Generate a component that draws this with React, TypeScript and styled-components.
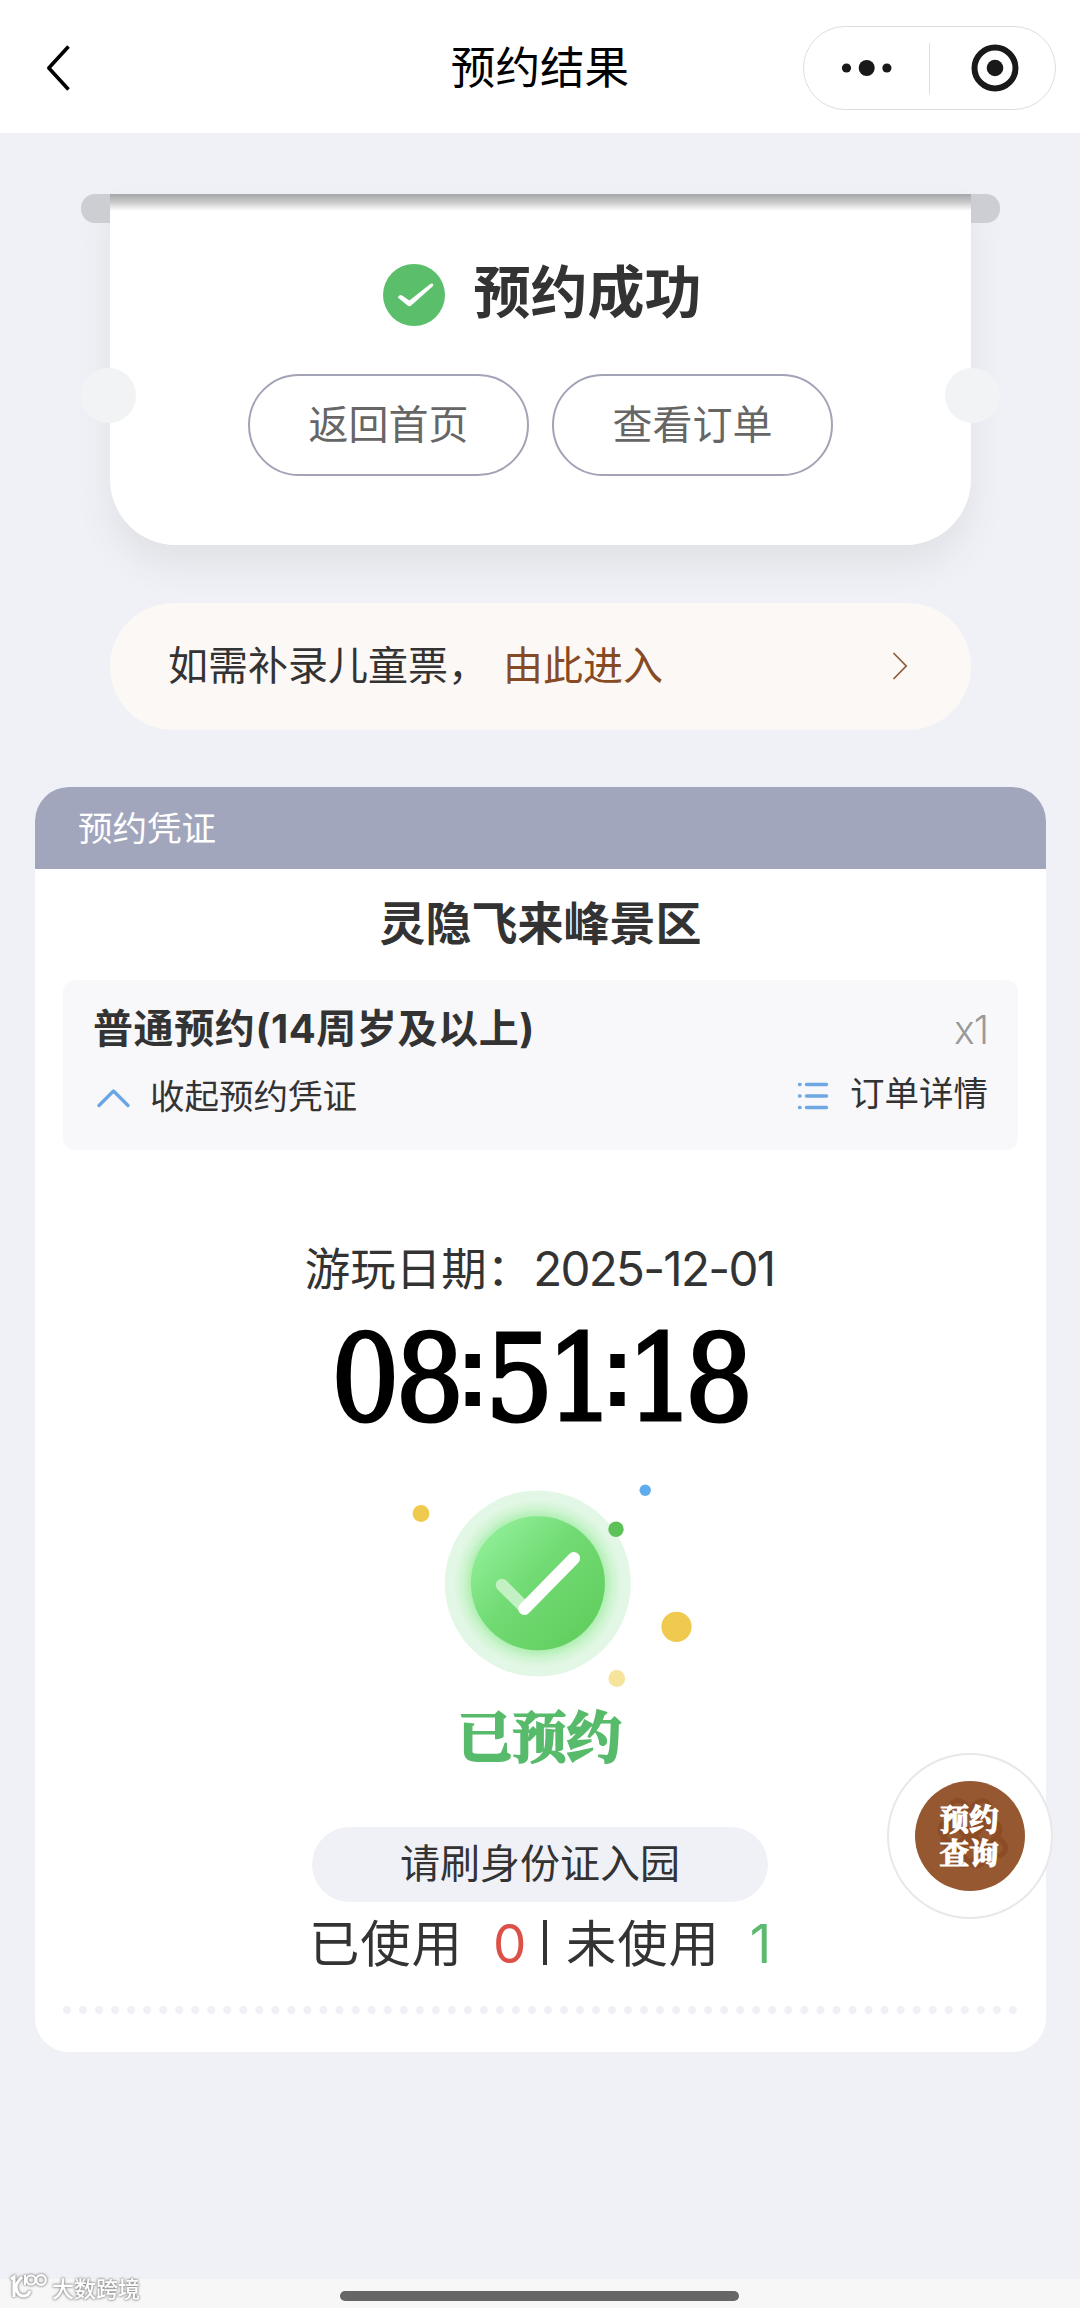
import React from "react";
import styled, { createGlobalStyle } from "styled-components";

const sans = `"Noto Sans CJK SC", "Noto Sans", sans-serif`;
const numeric = `Inter, "Noto Sans", sans-serif`;

const GlobalStyle = createGlobalStyle`
  * { box-sizing: border-box; }
  body { margin: 0; background: #f0f1f7; font-family: ${sans}; color: #333; }
  button { font: inherit; color: inherit; background: none; border: 0; padding: 0; margin: 0; cursor: pointer; }
  svg { display: block; flex: none; }
`;

const Page = styled.div`
  position: relative;
  display: flex;
  flex-direction: column;
  width: 1080px;
  height: 2308px;
  overflow: hidden;
  background: #f0f1f7;
`;

const NavBar = styled.header`
  display: grid;
  grid-template-columns: 1fr auto 1fr;
  align-items: center;
  flex: none;
  height: 133px;
  padding: 3px 24px 0 43px;
  background: #fff;
`;

const NavTitle = styled.h1`
  margin: 0 0 0 -19px;
  font-size: 44.6px;
  line-height: 60px;
  font-weight: 400;
  color: #000;
  transform: translateY(-3px);
`;

const Capsule = styled.div`
  display: flex;
  align-items: center;
  justify-self: end;
  width: 253px;
  height: 84px;
  border: 1px solid #dedede;
  border-radius: 42px;
`;

const CapsuleButton = styled.button`
  display: flex;
  flex: 1;
  align-items: center;
  justify-content: center;
  height: 100%;
`;

const CapsuleDivider = styled.span`
  width: 1px;
  height: 51px;
  background: #e0e0e0;
`;

const Content = styled.main`
  display: flex;
  flex-direction: column;
  flex: 1;
  padding: 61px 34px 0 35px;
`;

const Ticket = styled.section`
  position: relative;
  display: flex;
  flex-direction: column;
  align-items: center;
  width: 861px;
  height: 351px;
  margin-left: 75px;
  padding-top: 60px;
  border-radius: 0 0 66px 66px;
  background: linear-gradient(#a5a6a8 0, #c8c8c9 8px, #fff 17px);
  box-shadow: 0 20px 36px rgba(70, 76, 60, 0.09);
`;

const Rod = styled.span<{ $side: "left" | "right" }>`
  position: absolute;
  top: 0;
  ${(p) => p.$side}: -29px;
  width: 29px;
  height: 29px;
  background: #cdced3;
  border-radius: ${(p) => (p.$side === "left" ? "14px 0 0 14px" : "0 14px 14px 0")};
`;

const Notch = styled.span<{ $side: "left" | "right" }>`
  position: absolute;
  top: 174px;
  ${(p) => p.$side}: -29px;
  width: 55px;
  height: 55px;
  border-radius: 50%;
  background: #f1f3f5;
`;

const StatusRow = styled.div`
  display: flex;
  align-items: center;
  gap: 29px;
  height: 82px;
  margin-left: 3px;
`;

const StatusText = styled.h2`
  margin: 0;
  font-size: 57px;
  line-height: 80px;
  font-weight: 700;
  transform: translateY(-7px);
`;

const Actions = styled.div`
  display: flex;
  gap: 23px;
  margin-top: 38px;
  margin-right: 1px;
`;

const OutlineButton = styled.button`
  width: 281px;
  height: 102px;
  padding: 0 0 7px 1px;
  border: 2px solid #a2a3b7;
  border-radius: 51px;
  font-size: 40px;
  color: #666;
`;

const Notice = styled.a`
  display: flex;
  align-items: center;
  width: 861px;
  height: 127px;
  margin: 58px 0 0 75px;
  padding: 0 63px 7px 58px;
  border-radius: 64px;
  background: #fcf8f5;
  font-size: 40px;
  line-height: 120px;
`;

const NoticeLink = styled.span`
  flex: 1;
  margin-left: 15px;
  color: #864a24;
`;

const NoticeArrow = styled.svg`
  position: relative;
  top: 3px;
`;

const Voucher = styled.section`
  display: flex;
  flex-direction: column;
  height: 1265px;
  margin-top: 57px;
  border-radius: 34px;
  overflow: hidden;
  background: #fff;
`;

const VoucherHeader = styled.div`
  height: 82px;
  padding-left: 43px;
  background: #a2a6bc;
  color: #fff;
  font-size: 34.5px;
  line-height: 79px;
`;

const VenueName = styled.h3`
  height: 111px;
  margin: 0;
  font-size: 46px;
  line-height: 103px;
  text-align: center;
`;

const TypeBox = styled.div`
  display: flex;
  flex-direction: column;
  height: 170px;
  margin: 0 28px;
  padding: 18px 30px 0 30px;
  border-radius: 12px;
  background: #f8f8fb;
`;

const TypeRow = styled.div`
  display: flex;
  justify-content: space-between;
  align-items: center;
  height: 60px;
`;

const TypeName = styled.strong`
  font-size: 40px;
  line-height: 60px;
  letter-spacing: 0.6px;
  transform: translateY(-1px);
`;

const Latin = styled.span`
  font-family: ${numeric};
  letter-spacing: 0.5px;
`;

const Count = styled.span`
  font-family: ${numeric};
  font-size: 39px;
  font-weight: 300;
  letter-spacing: -1px;
  color: #999;
  transform: translateY(1px);
`;

const LinkRow = styled(TypeRow)`
  height: 50px;
  margin-top: 11px;
`;

const TextLink = styled.button<{ $lift?: number; $gap: number }>`
  display: flex;
  align-items: center;
  gap: ${(p) => p.$gap}px;
  font-size: 34.5px;
  line-height: 50px;
  & > span { transform: translateY(${(p) => -(p.$lift ?? 0)}px); }
  & > svg { transform: translateY(2px); }
`;

const VisitDate = styled.p`
  display: flex;
  justify-content: center;
  align-items: baseline;
  margin: 84px 2px 0 0;
  height: 70px;
  font-size: 45.5px;
  line-height: 64px;
`;

const DateValue = styled.span`
  margin-left: 1px;
  font-family: ${numeric};
  font-size: 47.5px;
  letter-spacing: -1.7px;
`;

const Clock = styled.div`
  margin: 29px 0 0 296px;
  height: 91px;
  white-space: nowrap;
  font-family: "DejaVu Serif Condensed", "DejaVu Serif", serif;
  font-stretch: condensed;
  font-size: 120px;
  line-height: 91px;
  color: #000;
  -webkit-text-stroke: 3px #000;
`;

const ClockDigit = styled.span<{ $track: number }>`
  letter-spacing: ${(p) => p.$track}px;
`;

const ClockColon = styled(ClockDigit)`
  position: relative;
  top: -14px;
  font-family: "Liberation Sans", sans-serif;
  font-size: 102px;
  line-height: 1px;
  font-weight: 700;
  -webkit-text-stroke: 0;
`;

const Badge = styled.div`
  display: flex;
  flex-direction: column;
  align-items: center;
  margin: 50px 3px 0 0;
`;

const BadgeText = styled.strong`
  height: 90px;
  font-family: "Noto Serif CJK SC", ${sans};
  font-size: 55px;
  line-height: 80px;
  letter-spacing: -0.5px;
  color: #57bb6b;
  -webkit-text-stroke: 2px #57bb6b;
`;

const Hint = styled.div`
  align-self: center;
  width: 456px;
  height: 75px;
  margin: 43px 1px 0 0;
  border-radius: 38px;
  background: #f0f1f7;
  font-size: 40px;
  line-height: 69px;
  text-align: center;
`;

const Usage = styled.div`
  display: flex;
  align-items: center;
  height: 80px;
  margin-left: 274px;
  font-size: 50.4px;
  line-height: 73px;
  letter-spacing: 0.9px;
  & > span { margin-top: -3px; }
`;

const UsageCount = styled.span<{ $color: string; $width: number }>`
  width: ${(p) => p.$width}px;
  margin-left: 30px;
  font-family: ${numeric};
  font-size: 53px;
  color: ${(p) => p.$color};
  transform: translateY(4px);
`;

const UsageBar = styled.i`
  width: 4px;
  height: 45px;
  margin: 0 19px 0 16px;
  background: #333;
`;

const Dots = styled.div`
  height: 10px;
  margin: 23px 28px 0;
  background: radial-gradient(circle at 4px 5px, #f0f1f6 3.6px, transparent 4.4px) 0 0 / 16.04px 10px repeat-x;
`;

const FloatButton = styled.button`
  position: absolute;
  left: 887px;
  top: 1753px;
  display: grid;
  place-items: center;
  width: 166px;
  height: 166px;
  border: 2px solid #e8e8e8;
  border-radius: 50%;
  background: #fff;
`;

const FloatCore = styled.span`
  position: relative;
  display: grid;
  place-items: center;
  width: 110px;
  height: 110px;
  border-radius: 50%;
  background: #965831;
`;

const Knot = styled.svg`
  position: absolute;
  inset: 0;
`;

const FloatLabel = styled.span`
  position: relative;
  top: -2px;
  left: -1px;
  width: 62px;
  color: #fff;
  font-family: "Noto Serif CJK SC", ${sans};
  font-size: 29.5px;
  line-height: 34px;
  font-weight: 700;
  -webkit-text-stroke: 1.2px #fff;
`;

const HomeBar = styled.footer`
  display: flex;
  justify-content: center;
  align-items: flex-start;
  flex: none;
  height: 29px;
  padding: 12px 1px 0 0;
  background: #f7f7f7;
`;

const HomeIndicator = styled.span`
  width: 399px;
  height: 10px;
  border-radius: 5px;
  background: #666;
`;

const Watermark = styled.div`
  position: absolute;
  left: 8px;
  top: 2270px;
  display: flex;
  align-items: center;
  gap: 4px;
  height: 34px;
  color: #fff;
  font-size: 22px;
  line-height: 34px;
  font-weight: 500;
  filter: drop-shadow(0 0 1px #888) drop-shadow(0 0 1px #aaa);
`;

const clock: [string, number][] = [
  ["0", -4.2], ["8", -8.4], [":", -4.8], ["5", -7.2], ["1", -14.7], [":", -8], ["1", -10.2], ["8", 0],
];

function SuccessArt() {
  return (
    <svg width="320" height="220" viewBox="379.5 1474 320 220">
      <defs>
        <linearGradient id="disc" x1="0.1" y1="0.15" x2="0.85" y2="0.85">
          <stop offset="0" stopColor="#8fee96" />
          <stop offset="0.45" stopColor="#72db74" />
          <stop offset="1" stopColor="#63cf60" />
        </linearGradient>
        <radialGradient id="halo">
          <stop offset="0.7" stopColor="#a9eeac" />
          <stop offset="0.8" stopColor="#cdf4cf" />
          <stop offset="0.9" stopColor="#e2f7e5" />
          <stop offset="1" stopColor="#e2f7e5" />
        </radialGradient>
      </defs>
      <circle cx="538.3" cy="1583.5" r="93" fill="url(#halo)" />
      <circle cx="538.4" cy="1583.3" r="67" fill="url(#disc)" />
      <g fill="none" strokeWidth="12.5" strokeLinecap="round">
        <path d="M502.5 1585l22.3 22.3" stroke="#c4f1c3" />
        <path d="M525 1608.7l49.3-50.4" stroke="#fff" />
      </g>
      <circle cx="421.5" cy="1513.5" r="8.4" fill="#f0ca4f" />
      <circle cx="645.7" cy="1490.3" r="5.7" fill="#5eacec" />
      <circle cx="616.5" cy="1529.2" r="7.7" fill="#5cc257" />
      <circle cx="677" cy="1626.8" r="15.1" fill="#f0ca4f" />
      <circle cx="617.3" cy="1678.5" r="8.4" fill="#f7e49c" />
    </svg>
  );
}

export default function App() {
  return (
    <>
      <GlobalStyle />
      <Page>
        <NavBar>
          <button aria-label="返回">
            <svg width="30" height="48" viewBox="0 0 30 48" fill="none" stroke="#000" strokeWidth="3.6">
              <path d="M25.5 2.5L5.8 24l19.7 21.5" strokeLinejoin="round" />
            </svg>
          </button>
          <NavTitle>预约结果</NavTitle>
          <Capsule>
            <CapsuleButton aria-label="更多">
              <svg width="52" height="18" viewBox="0 0 52 18" fill="#191919">
                <circle cx="5.5" cy="9" r="4.6" />
                <circle cx="25.7" cy="9" r="8" />
                <circle cx="45.9" cy="9" r="4.6" />
              </svg>
            </CapsuleButton>
            <CapsuleDivider />
            <CapsuleButton aria-label="关闭">
              <svg width="52" height="48" viewBox="0 0 52 48">
                <circle cx="28" cy="24" r="20.5" fill="none" stroke="#191919" strokeWidth="6" />
                <circle cx="28" cy="24" r="8.3" fill="#191919" />
              </svg>
            </CapsuleButton>
          </Capsule>
        </NavBar>

        <Content>
          <Ticket>
            <Rod $side="left" />
            <Rod $side="right" />
            <Notch $side="left" />
            <Notch $side="right" />
            <StatusRow>
              <svg width="62" height="62" viewBox="0 0 62 62">
                <circle cx="31" cy="31" r="31" fill="#5abe6b" />
                <path d="M15.2 32.6q2-2.6 4.2-.8l7 4.8L47 20.3q2.5-1.6 3.3.5.2.8-.8 1.8L28.2 41.4q-1.9 1.6-3.6 0L15.4 34q-.6-.7-.2-1.4z" fill="#fff" />
              </svg>
              <StatusText>预约成功</StatusText>
            </StatusRow>
            <Actions>
              <OutlineButton>返回首页</OutlineButton>
              <OutlineButton>查看订单</OutlineButton>
            </Actions>
          </Ticket>

          <Notice>
            <span>如需补录儿童票，</span>
            <NoticeLink>由此进入</NoticeLink>
            <NoticeArrow width="16" height="28" viewBox="0 0 16 28" fill="none" stroke="#8f5a38" strokeWidth="1.7">
              <path d="M1.5 1l12.7 13L1.5 27" />
            </NoticeArrow>
          </Notice>

          <Voucher>
            <VoucherHeader>预约凭证</VoucherHeader>
            <VenueName>灵隐飞来峰景区</VenueName>
            <TypeBox>
              <TypeRow>
                <TypeName>普通预约<Latin>(14</Latin>周岁及以上<Latin>)</Latin></TypeName>
                <Count>x1</Count>
              </TypeRow>
              <LinkRow>
                <TextLink $gap={17} $lift={0}>
                  <svg width="40" height="26" viewBox="0 0 40 26" fill="none" stroke="#6aa5e6" strokeWidth="3.4" strokeLinecap="round" strokeLinejoin="round">
                    <path d="M6 22.5L20.5 8 35 22.5" />
                  </svg>
                  <span>收起预约凭证</span>
                </TextLink>
                <TextLink $gap={21} $lift={3}>
                  <svg width="32" height="32" viewBox="0 0 32 32" stroke="#6ea7e4" strokeWidth="3.4" strokeLinecap="round">
                    <path d="M2.5 4.5h.6M9.5 4.5h20M2.5 16h.6M9.5 16h20M2.5 27.5h.6M9.5 27.5h20" />
                  </svg>
                  <span>订单详情</span>
                </TextLink>
              </LinkRow>
            </TypeBox>

            <VisitDate>
              <span>游玩日期：</span>
              <DateValue>2025-12-01</DateValue>
            </VisitDate>
            <Clock>
              {clock.map(([glyph, track], i) =>
                glyph === ":" ? (
                  <ClockColon key={i} $track={track}>{glyph}</ClockColon>
                ) : (
                  <ClockDigit key={i} $track={track}>{glyph}</ClockDigit>
                ),
              )}
            </Clock>
            <Badge>
              <SuccessArt />
              <BadgeText>已预约</BadgeText>
            </Badge>
            <Hint>请刷身份证入园</Hint>
            <Usage>
              <span>已使用</span>
              <UsageCount $color="#dc5047" $width={34}>0</UsageCount>
              <UsageBar />
              <span>未使用</span>
              <UsageCount $color="#5bb970" $width={30}>1</UsageCount>
            </Usage>
            <Dots />
          </Voucher>
        </Content>

        <HomeBar>
          <HomeIndicator />
        </HomeBar>

        <FloatButton>
          <FloatCore>
            <Knot width="110" height="110" viewBox="0 0 110 110" fill="none" stroke="#84451f" strokeWidth="5" opacity="0.6">
              <g transform="rotate(45 55 55)">
                <rect x="19" y="36" width="72" height="16" rx="8" />
                <rect x="27" y="58" width="56" height="16" rx="8" />
                <rect x="36" y="19" width="16" height="60" rx="8" />
                <rect x="58" y="27" width="16" height="56" rx="8" />
              </g>
            </Knot>
            <FloatLabel>预约查询</FloatLabel>
          </FloatCore>
        </FloatButton>

        <Watermark>
          <svg width="40" height="30" viewBox="0 0 40 30" fill="none" stroke="#fff" strokeWidth="3">
            <path d="M3 7l3-2v20M14 5q-6 6-6 10 1 9 8 9 4 0 6-5" />
            <path d="M17 3v10" strokeWidth="2" />
            <circle cx="23" cy="8" r="4.5" strokeWidth="2.2" />
            <circle cx="33" cy="8" r="4.8" strokeWidth="2.2" />
          </svg>
          <span>大数跨境</span>
        </Watermark>
      </Page>
    </>
  );
}
